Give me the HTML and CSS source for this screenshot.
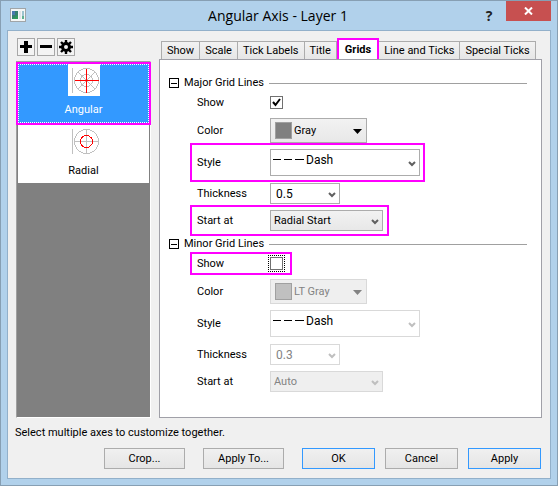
FILE: index.html
```html
<!DOCTYPE html>
<html lang="en">
<head>
<meta charset="utf-8">
<title>Angular Axis - Layer 1</title>
<link rel="stylesheet" href="styles.css">
</head>
<body>
<div class="window">
  <header class="titlebar">
    <svg class="app-icon" width="16" height="14" viewBox="0 0 16 14" aria-hidden="true">
      <rect x="0.5" y="0.5" width="15" height="13" fill="#f4f6f6" stroke="#a0a5a8"/>
      <rect x="2" y="3" width="6" height="8" fill="#35806f"/>
      <path d="M2 3h3v4H2z" fill="#4a79ae"/>
      <path d="M2 11l6-4v4z" fill="#2f9a58"/>
      <rect x="9" y="3" width="2" height="8" fill="#e2e5e6"/>
      <rect x="12" y="3" width="2" height="8" fill="#9cc3cf"/>
      <path d="M12 8h2v3h-2z" fill="#5fb191"/>
    </svg>
    <h1 class="title">Angular Axis - Layer 1</h1>
    <button class="help" aria-label="Help">?</button>
    <button class="close" aria-label="Close">
      <svg width="9" height="8" viewBox="0 0 9 8"><path d="M1 0.5L8 7.5M8 0.5L1 7.5" stroke="#fff" stroke-width="2"/></svg>
    </button>
  </header>
  <main class="client">
    <div class="columns">
      <aside class="side">
        <div class="tools">
          <button class="tool" aria-label="Add"><svg width="14" height="14" viewBox="0 0 14 14"><path d="M5 1h4v4h4v3H9v5H5V8H1V5h4z"/></svg></button>
          <button class="tool" aria-label="Remove"><svg width="14" height="14" viewBox="0 0 14 14"><path d="M1 5h12v3H1z"/></svg></button>
          <button class="tool" aria-label="Settings"><svg width="14" height="14" viewBox="0 0 14 14"><g fill="none" stroke="#000"><circle cx="7" cy="7" r="3.5" stroke-width="3"/><path d="M7 0v3M7 11v3M0 7h3M11 7h3M2 2l2 2M10 10l2 2M12 2l-2 2M4 10l-2 2" stroke-width="2.4"/></g></svg></button>
        </div>
        <div class="list">
          <button class="item selected">
            <svg class="axis-icon" width="32" height="32" viewBox="0 0 32 32" shape-rendering="crispEdges">
              <g fill="none" stroke="#c0c0c0"><path d="M4.5 4v25"/><circle cx="18.5" cy="16.5" r="12"/><circle cx="18.5" cy="16.5" r="6"/><path d="M10 8l17 17M27 8L10 25"/></g>
              <path d="M18.5 5v24M7 16.5h24" stroke="#f00" fill="none"/>
            </svg>
            <span>Angular</span>
          </button>
          <button class="item">
            <svg class="axis-icon" width="32" height="32" viewBox="0 0 32 32" shape-rendering="crispEdges">
              <g fill="none" stroke="#c0c0c0"><path d="M4.5 4v25M18.5 4v25M6 16.5h25"/><circle cx="18.5" cy="16.5" r="12"/></g>
              <circle cx="18.5" cy="16.5" r="6" fill="none" stroke="#f00"/>
            </svg>
            <span>Radial</span>
          </button>
        </div>
      </aside>
      <section class="pages">
        <div class="tabs" role="tablist">
          <button class="tab" role="tab">Show</button>
          <button class="tab" role="tab">Scale</button>
          <button class="tab" role="tab">Tick Labels</button>
          <button class="tab" role="tab">Title</button>
          <button class="tab active" role="tab" aria-selected="true">Grids</button>
          <button class="tab" role="tab">Line and Ticks</button>
          <button class="tab" role="tab">Special Ticks</button>
        </div>
        <div class="panel" role="tabpanel">
          <h2 class="heading"><button class="fold" aria-label="Collapse major grid lines"></button><span>Major Grid Lines</span></h2>
          <div class="row show"><label for="major-show">Show</label>
            <span class="check"><input id="major-show" type="checkbox" checked><svg width="13" height="13" viewBox="0 0 13 13"><path d="M3 6l2.5 3L10 3" fill="none" stroke="#000" stroke-width="2"/></svg></span></div>
          <div class="row color"><label for="major-color">Color</label>
            <span class="combo button-like"><i class="swatch"></i><select id="major-color"><option>Gray</option></select><svg class="arrow" width="9" height="5" viewBox="0 0 9 5"><path d="M0 0h9L4.5 5z"/></svg></span></div>
          <div class="row style marked"><label for="major-style">Style</label>
            <span class="combo"><svg class="dashes" width="31" height="1" viewBox="0 0 31 1"><path d="M0 0h8v1H0zM11 0h8v1h-8zM22 0h9v1h-9z"/></svg><select id="major-style"><option>Dash</option></select><svg class="chevron" width="8" height="6" viewBox="0 0 8 6"><path d="M1 1l3 3 3-3"/></svg></span></div>
          <div class="row thickness"><label for="major-thickness">Thickness</label>
            <span class="combo"><select id="major-thickness"><option>0.5</option></select><svg class="chevron" width="8" height="6" viewBox="0 0 8 6"><path d="M1 1l3 3 3-3"/></svg></span></div>
          <div class="row start marked"><label for="major-start">Start at</label>
            <span class="combo button-like"><select id="major-start"><option>Radial Start</option></select><svg class="chevron" width="8" height="6" viewBox="0 0 8 6"><path d="M1 1l3 3 3-3"/></svg></span></div>

          <h2 class="heading"><button class="fold" aria-label="Collapse minor grid lines"></button><span>Minor Grid Lines</span></h2>
          <div class="row show marked"><label for="minor-show">Show</label>
            <span class="check focused"><input id="minor-show" type="checkbox"></span></div>
          <div class="row color off"><label for="minor-color">Color</label>
            <span class="combo button-like"><i class="swatch"></i><select id="minor-color" disabled><option>LT Gray</option></select><svg class="arrow" width="9" height="5" viewBox="0 0 9 5"><path d="M0 0h9L4.5 5z"/></svg></span></div>
          <div class="row style off"><label for="minor-style">Style</label>
            <span class="combo"><svg class="dashes" width="31" height="1" viewBox="0 0 31 1"><path d="M0 0h8v1H0zM11 0h8v1h-8zM22 0h9v1h-9z"/></svg><select id="minor-style" disabled><option>Dash</option></select><svg class="chevron" width="8" height="6" viewBox="0 0 8 6"><path d="M1 1l3 3 3-3"/></svg></span></div>
          <div class="row thickness off"><label for="minor-thickness">Thickness</label>
            <span class="combo"><select id="minor-thickness" disabled><option>0.3</option></select><svg class="chevron" width="8" height="6" viewBox="0 0 8 6"><path d="M1 1l3 3 3-3"/></svg></span></div>
          <div class="row start off"><label for="minor-start">Start at</label>
            <span class="combo button-like"><select id="minor-start" disabled><option>Auto</option></select><svg class="chevron" width="8" height="6" viewBox="0 0 8 6"><path d="M1 1l3 3 3-3"/></svg></span></div>
        </div>
      </section>
    </div>
    <p class="hint">Select multiple axes to customize together.</p>
    <footer class="actions">
      <div class="group wide"><button>Crop...</button><button>Apply To...</button></div>
      <div class="group"><button class="primary">OK</button><button>Cancel</button><button class="primary">Apply</button></div>
    </footer>
  </main>
</div>
</body>
</html>
```
FILE: styles.css
```css
* { box-sizing: border-box; }

body {
  margin: 0;
  font: 11px/18px Roboto, "Liberation Sans", sans-serif;
  color: #000;
}

button, select, input {
  margin: 0;
  padding: 0;
  font: inherit;
  color: inherit;
  border-radius: 0;
}

svg { display: block; }

.window {
  display: flex;
  flex-direction: column;
  min-height: 100vh;
  padding: 0 6px 6px;
  border: 1px solid #879fb3;
  background: #b1d1eb;
}

/* Title bar */
.titlebar {
  display: grid;
  grid-template-columns: 77px 1fr 34px 45px;
  height: 29px;
}
.app-icon { margin: 7px 0 0 3px; }
.title {
  margin: 0;
  font: 14px/29px "Open Sans", sans-serif;
  text-align: center;
}
.help, .close { border: 0; background: none; }
.help { font: bold 14px/20px "Open Sans", sans-serif; color: #222; }
.close {
  display: grid;
  place-items: center;
  height: 20px;
  background: #c75050;
}

/* Client area */
.client {
  flex: 1;
  display: flex;
  flex-direction: column;
  padding: 7px 8px 9px 8px;
  border: 1px solid #92b0ca;
  background: #f0f0f0;
}
.columns { flex: 1; display: flex; gap: 8px; }

.side { flex: none; width: 135px; display: flex; flex-direction: column; }
.tools { display: flex; gap: 2px; padding: 0 0 5px 1px; }
.tool {
  display: grid;
  place-items: center;
  width: 18px;
  height: 18px;
  border: 1px solid #a8a8a8;
  background: #f4f4f4;
}
.list {
  flex: 1;
  display: flex;
  flex-direction: column;
  border: 1px solid;
  border-color: #a0a0a0 #fff #fff #a0a0a0;
  background: #808080;
}
.item {
  display: flex;
  flex-direction: column;
  align-items: center;
  gap: 5px;
  height: 58px;
  margin: 0 1px;
  border: 0;
  background: #fff;
}
.item.selected {
  height: 63px;
  margin: 0 -1px;
  border: 2px solid #f0f;
  background: #39f;
  color: #fff;
  outline: 1px dotted #fff;
  outline-offset: -3px;
}
.axis-icon { background: #fff; }

/* Tabs */
.pages { flex: 1; display: flex; flex-direction: column; }
.tabs { display: flex; align-items: flex-end; height: 21px; padding-left: 2px; }
.tab {
  height: 18px;
  padding: 0 5px;
  border: 1px solid #acacac;
  border-width: 1px 1px 0 0;
  background: linear-gradient(#f2f2f2, #e6e6e6);
  white-space: nowrap;
}
.tab:first-child { border-left-width: 1px; }
.tab.active {
  height: 23px;
  margin-bottom: -2px;
  padding: 0 6px;
  border: 2px solid #f0f;
  background: #fff;
  font-weight: bold;
}
.panel {
  flex: 1;
  padding: 15px 14px 20px 9px;
  border: 1px solid #a0a0a8;
  background: #fff;
}

/* Grid line groups */
.heading {
  display: flex;
  align-items: center;
  gap: 5px;
  margin: 0;
  height: 16px;
  font-size: 11px;
  font-weight: normal;
}
.heading::after { content: ""; flex: 1; height: 1px; background: #a0a0a0; }
.fold {
  display: grid;
  place-items: center;
  width: 10px;
  height: 10px;
  border: 1px solid #000;
  background: #fff;
}
.fold::after { content: ""; width: 6px; height: 1px; background: #000; }

.row {
  display: flex;
  align-items: center;
  width: fit-content;
  margin-left: 21px;
  padding: 0 3px 0 5px;
  border: 2px solid transparent;
}
.row label { width: 73px; }
.row.marked { border-color: #f0f; }
.row.show { height: 23px; padding-right: 7px; }
.row.color { height: 25px; margin-top: 4px; border-width: 0 2px; }
.row.style { height: 39px; }
.row.thickness { height: 21px; margin: 1px 0 1px 21px; border-width: 0 2px; }
.row.start { height: 31px; padding-right: 4px; }

.check, .combo { position: relative; display: block; }
.check input {
  appearance: none;
  display: block;
  width: 13px;
  height: 13px;
  border: 1px solid #707070;
  background: #fff;
}
.check svg { position: absolute; inset: 0; pointer-events: none; }
.check.focused { outline: 1px dotted #000; outline-offset: 1px; }

.combo select {
  appearance: none;
  display: block;
  width: 100%;
  height: 21px;
  padding: 0 18px 0 3px;
  border: 1px solid #acacac;
  background: #fff;
  opacity: 1;
}
.button-like select { background: linear-gradient(#f2f2f2, #e8e8e8); }
.color .combo { width: 97px; }
.color select { height: 25px; padding-left: 23px; }
.style .combo { width: 150px; }
.style select { height: 27px; padding: 0 18px 6px 35px; font-size: 12px; }
.thickness .combo { width: 70px; }
.thickness select { padding-left: 5px; font-size: 12px; }
.start .combo { width: 113px; }

.swatch {
  position: absolute;
  left: 5px;
  top: 4px;
  width: 17px;
  height: 17px;
  border: 1px solid #a0a0a0;
  background: #808080;
}
.dashes { position: absolute; left: 3px; top: 10px; }
.arrow, .chevron { position: absolute; top: 50%; pointer-events: none; }
.arrow { right: 5px; margin-top: -2px; }
.chevron { right: 4px; margin-top: -2px; fill: none; stroke: #606060; stroke-width: 2; }

.off select { border-color: #d9d9d9; color: #838383; }
.off .button-like select { background: #efefef; }
.style.off select { color: #000; }
.off .swatch { background: #c0c0c0; }
.off .arrow { fill: #838383; }
.off .chevron { stroke: #bfbfbf; }

/* Footer */
.hint { margin: 6px 0 6px -1px; }
.actions { display: flex; justify-content: flex-end; gap: 18px; padding-right: 1px; }
.group { display: flex; gap: 10px; }
.group.wide { gap: 18px; }
.actions button {
  width: 73px;
  height: 21px;
  border: 1px solid #acacac;
  background: linear-gradient(#f0f0f0, #e5e5e5);
}
.group.wide button { width: 81px; }
.actions .primary { border-color: #39f; }
```
